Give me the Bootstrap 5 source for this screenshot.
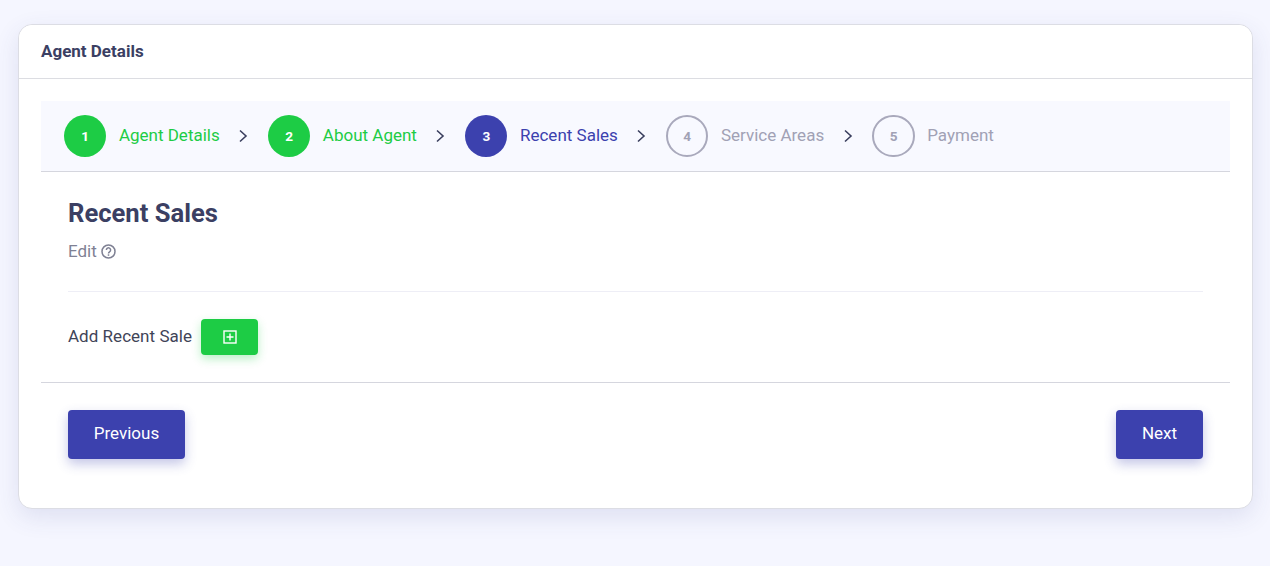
<!DOCTYPE html>
<html lang="en">
<head>
<meta charset="utf-8">
<title>Agent Details</title>
<link href="https://cdn.jsdelivr.net/npm/bootstrap@5.3.0/dist/css/bootstrap.min.css" rel="stylesheet">
<style>
html,body{height:100%}
body{background:#f5f6ff;font-family:Roboto,"Liberation Sans",sans-serif;color:#3a3f5e;padding:24px 17px 0 18px;overflow:hidden}
.agent-card{border:1px solid #dcdde4;border-radius:14px;box-shadow:0 8px 24px rgba(60,64,140,.12);height:485px;background:#fff}
.agent-head{height:54px;padding:0 22px;border-bottom:1px solid #dcdde2;background:#fff;border-radius:14px 14px 0 0;font-size:17px;font-weight:700;color:#3b3f63}
.agent-body{padding:22px 22px 0}
.steps{height:71px;padding-left:23px;background:#f8f9ff;border-bottom:1px solid #d5d6de}
.step-num{width:42.4px;height:42.4px;font-size:13.6px;font-weight:700;flex:none}
.step-label{font-size:17px;margin-left:12.5px}
.step-sep{width:48.2px;flex:none;padding-left:18.5px}
.done .step-num{background:#1dcc45;color:#fff}
.done .step-label{color:#1dcc45}
.now .step-num{background:#3c41ae;color:#fff}
.now .step-label{color:#3c41ae}
.todo .step-num{border:2px solid #a9a9bc;color:#a1a1b5}
.todo .step-label{color:#a1a1b5}
.pane{padding:27px 27px 0;height:210px}
.pane-title{font-size:25.6px;font-weight:700;color:#3b3f63;line-height:28px;margin:0}
.pane-sub{font-size:17px;color:#7f8194;line-height:19px;margin-top:15px}
.pane-rule{margin:30px 0 27px;border:0;border-top:1px solid #eeeef6;opacity:1}
.add-label{font-size:17px;color:#3f4458;letter-spacing:.03px}
.add-btn{width:57px;height:36px;background:#1dcc45;border:0;border-radius:4px;box-shadow:0 4px 10px rgba(29,204,69,.3);margin-left:9px;padding:0}
.add-btn:hover{background:#1dcc45}
.foot{border-top:1px solid #d5d6de;padding:27px 27px 0}
.nav-btn{height:49px;background:#3c41ae;border:0;border-radius:4px;color:#fff;font-size:17px;font-weight:400;box-shadow:0 5px 12px rgba(60,65,174,.3);padding:0 0 2px}
.nav-btn:hover{background:#3c41ae;color:#fff}
.btn-prev{width:117px}
.btn-next{width:87px}
</style>
</head>
<body>
<div class="card agent-card">
  <div class="agent-head d-flex align-items-center">Agent Details</div>
  <div class="agent-body">
    <div class="steps d-flex align-items-center">
      <div class="done d-flex align-items-center">
        <span class="step-num rounded-circle d-flex align-items-center justify-content-center">1</span>
        <span class="step-label">Agent Details</span>
      </div>
      <div class="step-sep d-flex"><svg width="11" height="14" viewBox="0 0 11 14" fill="none" stroke="#3a3f5e" stroke-width="1.6"><path d="M2 1.500 8 7l-6 5.500"/></svg></div>
      <div class="done d-flex align-items-center">
        <span class="step-num rounded-circle d-flex align-items-center justify-content-center">2</span>
        <span class="step-label">About Agent</span>
      </div>
      <div class="step-sep d-flex"><svg width="11" height="14" viewBox="0 0 11 14" fill="none" stroke="#3a3f5e" stroke-width="1.6"><path d="M2 1.500 8 7l-6 5.500"/></svg></div>
      <div class="now d-flex align-items-center">
        <span class="step-num rounded-circle d-flex align-items-center justify-content-center">3</span>
        <span class="step-label">Recent Sales</span>
      </div>
      <div class="step-sep d-flex"><svg width="11" height="14" viewBox="0 0 11 14" fill="none" stroke="#3a3f5e" stroke-width="1.6"><path d="M2 1.500 8 7l-6 5.500"/></svg></div>
      <div class="todo d-flex align-items-center">
        <span class="step-num rounded-circle d-flex align-items-center justify-content-center">4</span>
        <span class="step-label">Service Areas</span>
      </div>
      <div class="step-sep d-flex"><svg width="11" height="14" viewBox="0 0 11 14" fill="none" stroke="#3a3f5e" stroke-width="1.6"><path d="M2 1.500 8 7l-6 5.500"/></svg></div>
      <div class="todo d-flex align-items-center">
        <span class="step-num rounded-circle d-flex align-items-center justify-content-center">5</span>
        <span class="step-label">Payment</span>
      </div>
    </div>
    <div class="pane">
      <h3 class="pane-title">Recent Sales</h3>
      <div class="pane-sub d-flex align-items-center gap-1">Edit
        <svg width="15" height="15" viewBox="0 0 15 15" fill="none" stroke="#7f8194" stroke-width="1.500"><circle cx="7.500" cy="7.500" r="6.500"/><path d="M5.400 6a2.100 2.100 0 1 1 3.300 1.700C8 8.200 7.500 8.500 7.500 9.400"/><path d="M7.500 10.300v1.500"/></svg>
      </div>
      <hr class="pane-rule">
      <div class="d-flex align-items-center">
        <span class="add-label">Add Recent Sale</span>
        <button type="button" class="btn add-btn d-flex align-items-center justify-content-center" aria-label="Add">
          <svg width="14" height="14" viewBox="0 0 14 14" fill="none" stroke="#fff" stroke-width="1.400"><rect x="1" y="1" width="12" height="12"/><path d="M7 3.500v7M3.500 7h7"/></svg>
        </button>
      </div>
    </div>
    <div class="foot d-flex justify-content-between">
      <button type="button" class="btn nav-btn btn-prev">Previous</button>
      <button type="button" class="btn nav-btn btn-next">Next</button>
    </div>
  </div>
</div>
<script src="https://cdn.jsdelivr.net/npm/bootstrap@5.3.0/dist/js/bootstrap.bundle.min.js"></script>
</body>
</html>
